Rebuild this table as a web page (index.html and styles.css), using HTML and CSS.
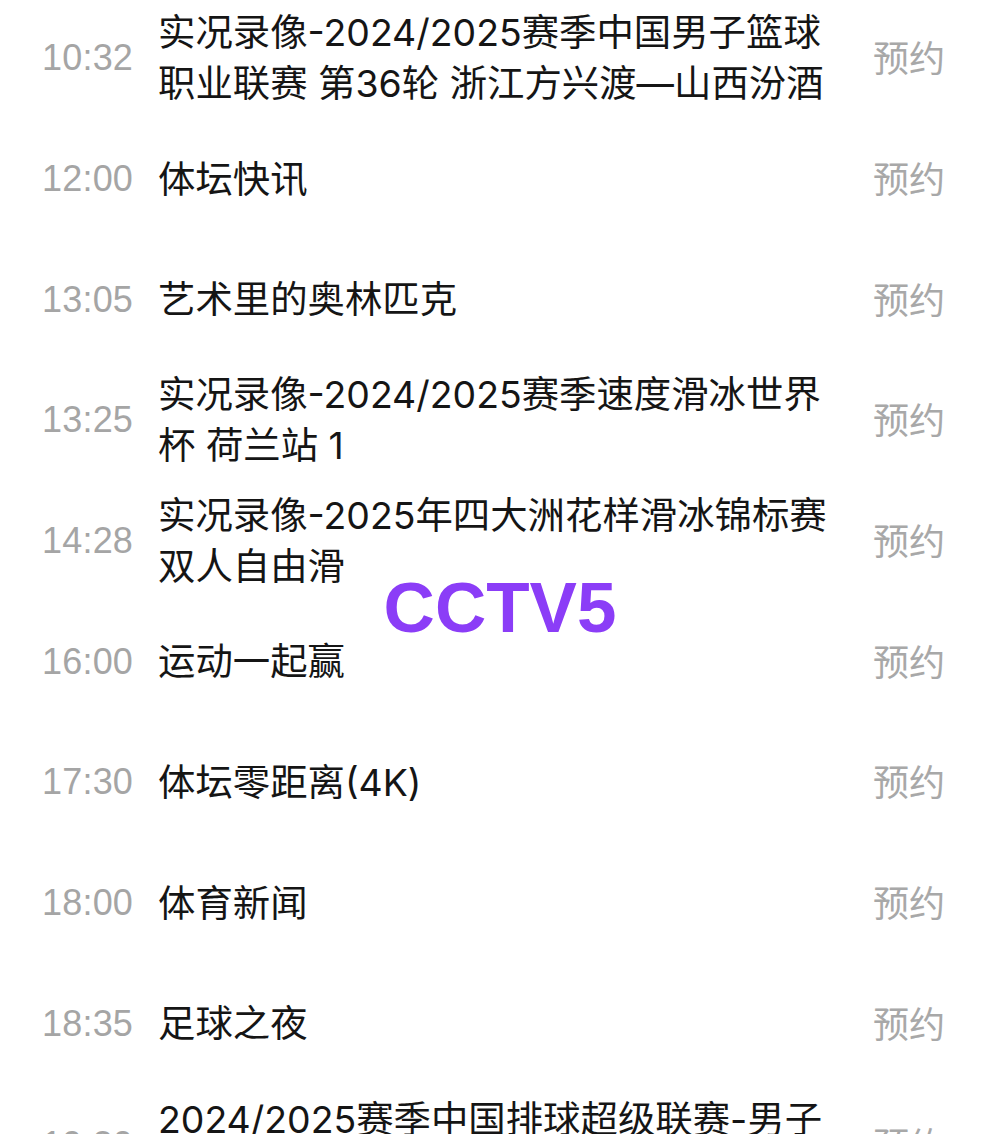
FILE: index.html
```html
<!DOCTYPE html>
<html lang="zh-CN">
<head>
<meta charset="utf-8">
<title>CCTV5 节目单</title>
<link rel="stylesheet" href="styles.css">
</head>
<body>
<div class="page">
  <ul class="list">
    <li class="row"><span class="time">10:32</span><span class="title">实况录像-2024/2025赛季中国男子篮球<br>职业联赛 第36轮 浙江方兴渡—山西汾酒</span><span class="btn">预约</span></li>
    <li class="row"><span class="time">12:00</span><span class="title">体坛快讯</span><span class="btn">预约</span></li>
    <li class="row"><span class="time">13:05</span><span class="title">艺术里的奥林匹克</span><span class="btn">预约</span></li>
    <li class="row"><span class="time">13:25</span><span class="title">实况录像-2024/2025赛季速度滑冰世界<br>杯 荷兰站 1</span><span class="btn">预约</span></li>
    <li class="row"><span class="time">14:28</span><span class="title">实况录像-2025年四大洲花样滑冰锦标赛<br>双人自由滑</span><span class="btn">预约</span></li>
    <li class="row"><span class="time">16:00</span><span class="title">运动一起赢</span><span class="btn">预约</span></li>
    <li class="row"><span class="time">17:30</span><span class="title">体坛零距离(4K)</span><span class="btn">预约</span></li>
    <li class="row"><span class="time">18:00</span><span class="title">体育新闻</span><span class="btn">预约</span></li>
    <li class="row"><span class="time">18:35</span><span class="title">足球之夜</span><span class="btn">预约</span></li>
    <li class="row"><span class="time">19:30</span><span class="title">2024/2025赛季中国排球超级联赛-男子<br>&nbsp;</span><span class="btn">预约</span></li>
  </ul>
  <div class="watermark">CCTV5</div>
</div>
</body>
</html>
```

FILE: styles.css
```css
html, body {
  margin: 0;
  padding: 0;
  background: #ffffff;
}

.page {
  position: relative;
  width: 1000px;
  height: 1134px;
  overflow: hidden;
}

.list {
  list-style: none;
  margin: -2px 0 0 0;
  padding: 0;
}

.row {
  display: flex;
  align-items: center;
  height: 120.7px;
  padding-left: 42px;
  box-sizing: border-box;
}

.time {
  width: 116px;
  flex: none;
  font-family: "Liberation Sans", "Noto Sans CJK SC", sans-serif;
  font-size: 36px;
  color: #a5a5a5;
  letter-spacing: 0.2px;
}

.title {
  width: 715px;
  flex: none;
  white-space: nowrap;
  font-family: Inter, "Noto Sans CJK SC", sans-serif;
  font-size: 37.4px;
  line-height: 51px;
  color: #151515;
}

.btn {
  flex: none;
  margin-bottom: 4px;
  font-family: "Noto Sans CJK SC", sans-serif;
  font-size: 36px;
  color: #a8a8a8;
}

.watermark {
  position: absolute;
  left: 0;
  right: 0;
  top: 572px;
  text-align: center;
  font-family: "Liberation Sans", sans-serif;
  font-weight: bold;
  font-size: 71px;
  line-height: 1;
  color: #8b3df7;
}
```
